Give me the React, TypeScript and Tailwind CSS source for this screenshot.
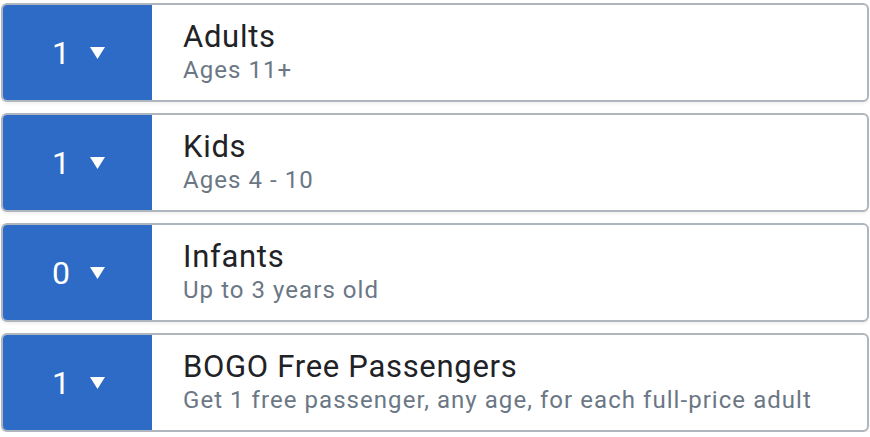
import React from 'react';

interface Row {
  count: number;
  title: string;
  note: string;
}

const rows: Row[] = [
  { count: 1, title: 'Adults', note: 'Ages 11+' },
  { count: 1, title: 'Kids', note: 'Ages 4 - 10' },
  { count: 0, title: 'Infants', note: 'Up to 3 years old' },
  { count: 1, title: 'BOGO Free Passengers', note: 'Get 1 free passenger, any age, for each full-price adult' },
];

function Caret() {
  return (
    <svg width="15" height="12" viewBox="0 0 15 12" className="block">
      <path d="M0 0 H15 L7.5 12 Z" fill="#ffffff" />
    </svg>
  );
}

function PassengerRow({ row }: { row: Row }) {
  return (
    <div className="flex h-[99px] overflow-hidden rounded-[6px] border-2 border-[#b0b6bd] bg-white shadow-[0_2px_3px_rgba(0,0,0,0.06)]">
      {/* count selector */}
      <button className="flex w-[149px] shrink-0 items-center justify-center gap-[20px] bg-[#2d6bc6] pl-[2px] text-white">
        <span className="text-[32px] leading-none">{row.count}</span>
        <Caret />
      </button>
      <div className="flex flex-col justify-center pl-[31px]">
        <div className="text-[31px] leading-[32px] tracking-[0.7px] text-[#1f2226]">{row.title}</div>
        <div className="mt-[2px] text-[24px] leading-[30px] tracking-[1.05px] text-[#6b7785]">{row.note}</div>
      </div>
    </div>
  );
}

export default function App() {
  return (
    <div className="flex w-[870px] flex-col gap-[11px] bg-white px-px pt-[3px] font-['Roboto','Liberation_Sans',sans-serif]">
      {rows.map((r) => (
        <PassengerRow key={r.title} row={r} />
      ))}
    </div>
  );
}
